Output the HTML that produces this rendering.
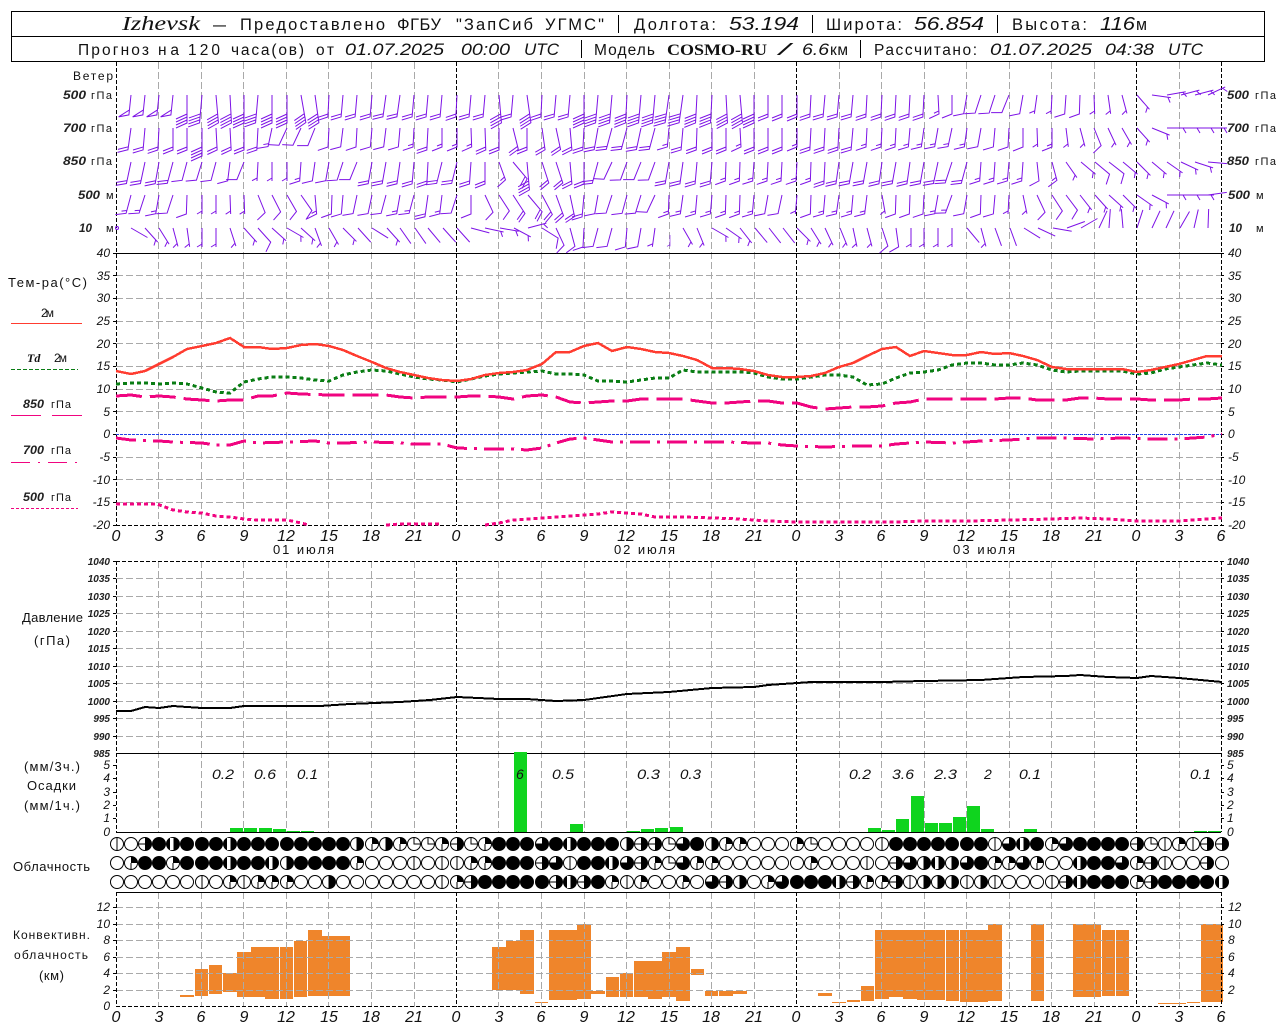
<!DOCTYPE html>
<html lang="ru"><head><meta charset="utf-8"><title>Izhevsk</title>
<style>
html,body{margin:0;padding:0;background:#fff;width:1280px;height:1024px;overflow:hidden}
svg{display:block}
text{font-family:"Liberation Sans",sans-serif;fill:#111;font-size:12px}
.i{font-style:italic}
.s{font-family:"Liberation Serif",serif;font-style:italic}
.h{font-size:16.5px}.h2{font-size:15.5px}
.hn{font-size:18px;font-style:italic}.h2n{font-size:17px;font-style:italic}
.n{font-style:italic;font-size:12px;fill:#111}
.p{font-style:italic;font-size:10px;font-weight:bold;fill:#222}
.x{font-style:italic;font-size:16px;text-anchor:middle}
.e{text-anchor:end}
.m{text-anchor:middle;font-size:13px}
.r{font-size:14px;font-style:italic}
.l{font-size:12px;font-style:italic;font-weight:bold;fill:#222}
</style></head><body>
<svg width="1280" height="1024" viewBox="0 0 1280 1024" shape-rendering="crispEdges" xmlns="http://www.w3.org/2000/svg">
<defs>
<path id="s" d="M0 0V19"/>
<path id="h" d="M0 0V19M0 16L-5 19"/>
<path id="g" d="M0 0V19L-10 23"/>
<path id="c" d="M0 0V19L-10 23M0 16L-5 18"/>
<path id="d" d="M0 0V22L-10 26M0 19L-10 23"/>
<path id="t" d="M0 0V28L-11 33M0 25L-11 30M0 22L-11 27M0 19L-11 24"/>
<path id="f" d="M0 0V20L-10 23L0 15"/>
<circle id="E" r="6.5" fill="#fff" stroke="#000"/>
<g id="v"><use href="#E"/><path d="M0-6.5V6.5" stroke="#000"/></g>
<circle id="F" r="7" fill="#000"/>
<g id="G"><use href="#E"/><path d="M0-6.5A6.5 6.5 0 0 1 0 6.5Z" fill="#000"/><path d="M-6.5 0H0" stroke="#000"/></g>
<g id="C"><use href="#E"/><path d="M0-6.5A6.5 6.5 0 0 1 0 6.5Z" fill="#000"/><path d="M0-6.5V6.5" stroke="#000"/></g>
<g id="N"><use href="#F"/><rect x="-3" y="-6" width="3.5" height="12" fill="#fff"/></g>
<g id="Q"><use href="#E"/><path d="M0 0V-6.5A6.5 6.5 0 0 1 6.5 0Z" fill="#000"/><path d="M0 0V6.5" stroke="#000"/></g>
<g id="U"><use href="#E"/><path d="M0-6.5V0H6.5" stroke="#000" fill="none"/></g>
<g id="K"><use href="#F"/><path d="M0 0H-7A7 7 0 0 1 0-7Z" fill="#fff"/><path d="M0 0H-6.5A6.5 6.5 0 0 1 0-6.5" fill="none" stroke="#000"/></g>
</defs>

<!-- header -->
<rect x="11.5" y="11.5" width="1253" height="25" fill="none" stroke="#000"/>
<rect x="11.5" y="36.5" width="1253" height="25" fill="none" stroke="#000"/>
<text class="s" x="122" y="30" style="font-size:20px" textLength="78" lengthAdjust="spacingAndGlyphs">Izhevsk</text>
<text class="h" x="213" y="30" textLength="13" lengthAdjust="spacingAndGlyphs">—</text>
<text class="h" x="240" y="30" textLength="145">Предоставлено</text>
<text class="h" x="397" y="30" textLength="44">ФГБУ</text>
<text class="h" x="456" y="30" textLength="77">"ЗапСиб</text>
<text class="h" x="545" y="30" textLength="59">УГМС"</text>
<path d="M618.5 15V33M812.5 15V33M997.5 15V33M581.5 40V58M860.5 40V58" stroke="#000" fill="none"/>
<text class="h" x="634" y="30" textLength="82">Долгота:</text>
<text class="hn" x="729" y="30" textLength="70" lengthAdjust="spacingAndGlyphs">53.194</text>
<text class="h" x="826" y="30" textLength="76">Широта:</text>
<text class="hn" x="914" y="30" textLength="70" lengthAdjust="spacingAndGlyphs">56.854</text>
<text class="h" x="1012" y="30" textLength="75">Высота:</text>
<text class="hn" x="1100" y="30" textLength="35" lengthAdjust="spacingAndGlyphs">116</text>
<text class="h" x="1136" y="30" textLength="11" lengthAdjust="spacingAndGlyphs">м</text>
<text class="h2" x="78" y="55" textLength="71">Прогноз</text>
<text class="h2" x="158" y="55" textLength="21">на</text>
<text class="h2" x="188" y="55" textLength="32">120</text>
<text class="h2" x="231" y="55" textLength="73">часа(ов)</text>
<text class="h2" x="316" y="55" textLength="18">от</text>
<text class="h2n" x="345" y="55" textLength="99" lengthAdjust="spacingAndGlyphs">01.07.2025</text>
<text class="h2n" x="461" y="55" textLength="49" lengthAdjust="spacingAndGlyphs">00:00</text>
<text class="h2n" x="524" y="55" textLength="35" lengthAdjust="spacingAndGlyphs">UTC</text>
<text class="h2" x="594" y="55" textLength="61">Модель</text>
<text class="s" x="667" y="55" style="font-size:15.5px;font-style:normal;font-weight:bold" textLength="100" lengthAdjust="spacingAndGlyphs">COSMO-RU</text>
<text class="h2n" x="779" y="55" textLength="11" lengthAdjust="spacingAndGlyphs">/</text>
<text class="h2n" x="802" y="55" textLength="27" lengthAdjust="spacingAndGlyphs">6.6</text>
<text class="h2" x="830" y="55" textLength="18">км</text>
<text class="h2" x="874" y="55" textLength="103">Рассчитано:</text>
<text class="h2n" x="990" y="55" textLength="102" lengthAdjust="spacingAndGlyphs">01.07.2025</text>
<text class="h2n" x="1105" y="55" textLength="49" lengthAdjust="spacingAndGlyphs">04:38</text>
<text class="h2n" x="1168" y="55" textLength="35" lengthAdjust="spacingAndGlyphs">UTC</text>

<!-- conv cloud bars -->
<g fill="#ef852b">
<rect x="180" y="995" width="14" height="2"/><rect x="195" y="969" width="13" height="27"/><rect x="209" y="965" width="13" height="29"/><rect x="223" y="973" width="14" height="19"/><rect x="237" y="952" width="14" height="45"/><rect x="251" y="947" width="14" height="50"/><rect x="265" y="947" width="14" height="52"/><rect x="280" y="947" width="13" height="52"/><rect x="294" y="941" width="13" height="56"/><rect x="308" y="930" width="14" height="66"/><rect x="322" y="936" width="14" height="60"/><rect x="336" y="936" width="14" height="60"/>
<rect x="492" y="947" width="14" height="43"/><rect x="506" y="941" width="14" height="49"/><rect x="520" y="930" width="14" height="64"/><rect x="535" y="1002" width="13" height="1"/><rect x="549" y="930" width="14" height="70"/><rect x="563" y="930" width="14" height="70"/><rect x="577" y="924" width="14" height="75"/><rect x="591" y="991" width="14" height="3"/><rect x="606" y="977" width="13" height="20"/><rect x="620" y="973" width="13" height="24"/><rect x="634" y="961" width="14" height="36"/><rect x="648" y="961" width="14" height="38"/><rect x="662" y="952" width="14" height="45"/><rect x="676" y="947" width="14" height="54"/><rect x="691" y="969" width="13" height="6"/><rect x="705" y="991" width="13" height="5"/><rect x="719" y="991" width="14" height="5"/><rect x="733" y="991" width="14" height="3"/>
<rect x="818" y="993" width="14" height="3"/><rect x="832" y="1002" width="14" height="1"/><rect x="847" y="1000" width="13" height="2"/><rect x="861" y="986" width="13" height="15"/><rect x="875" y="930" width="14" height="69"/><rect x="889" y="930" width="14" height="67"/><rect x="903" y="930" width="14" height="69"/><rect x="917" y="930" width="14" height="70"/><rect x="931" y="930" width="14" height="70"/><rect x="946" y="930" width="13" height="71"/><rect x="960" y="930" width="14" height="72"/><rect x="974" y="930" width="14" height="72"/><rect x="988" y="924" width="14" height="77"/><rect x="1031" y="924" width="13" height="77"/><rect x="1073" y="924" width="14" height="73"/><rect x="1087" y="924" width="14" height="73"/><rect x="1102" y="930" width="13" height="66"/><rect x="1116" y="930" width="13" height="66"/><rect x="1158" y="1003" width="14" height="1"/><rect x="1172" y="1003" width="14" height="1"/><rect x="1187" y="1002" width="13" height="1"/><rect x="1201" y="924" width="14" height="78"/><rect x="1215" y="924" width="8" height="78"/>
</g>

<!-- grid -->
<path fill="none" stroke="#a9a9a9" stroke-dasharray="7 3" d="M116 275.5H1221M116 298.5H1221M116 321.5H1221M116 343.5H1221M116 366.5H1221M116 389.5H1221M116 411.5H1221M116 457.5H1221M116 479.5H1221M116 502.5H1221
M116 578.5H1221M116 596.5H1221M116 613.5H1221M116 631.5H1221M116 648.5H1221M116 666.5H1221M116 683.5H1221M116 701.5H1221M116 718.5H1221M116 736.5H1221
M116 907.5H1221M116 924.5H1221M116 940.5H1221M116 957.5H1221M116 973.5H1221M116 990.5H1221
M158.5 62V525M158.5 561V832M158.5 892V1007M201.5 62V525M201.5 561V832M201.5 892V1007M243.5 62V525M243.5 561V832M243.5 892V1007M286.5 62V525M286.5 561V832M286.5 892V1007M328.5 62V525M328.5 561V832M328.5 892V1007M371.5 62V525M371.5 561V832M371.5 892V1007M414.5 62V525M414.5 561V832M414.5 892V1007
M498.5 62V525M498.5 561V832M498.5 892V1007M541.5 62V525M541.5 561V832M541.5 892V1007M584.5 62V525M584.5 561V832M584.5 892V1007M626.5 62V525M626.5 561V832M626.5 892V1007M669.5 62V525M669.5 561V832M669.5 892V1007M711.5 62V525M711.5 561V832M711.5 892V1007M754.5 62V525M754.5 561V832M754.5 892V1007
M839.5 62V525M839.5 561V832M839.5 892V1007M881.5 62V525M881.5 561V832M881.5 892V1007M924.5 62V525M924.5 561V832M924.5 892V1007M966.5 62V525M966.5 561V832M966.5 892V1007M1009.5 62V525M1009.5 561V832M1009.5 892V1007M1051.5 62V525M1051.5 561V832M1051.5 892V1007M1094.5 62V525M1094.5 561V832M1094.5 892V1007M1179.5 62V525M1179.5 561V832M1179.5 892V1007"/>
<path fill="none" stroke="#000" stroke-dasharray="4 2" d="M116.5 62V525M116.5 561V832M116.5 892V1007M456.5 62V525M456.5 561V832M456.5 892V1007M796.5 62V525M796.5 561V832M796.5 892V1007M1136.5 62V525M1136.5 561V832M1136.5 892V1007M1221.5 62V525M1221.5 561V832M1221.5 892V1007M116 525.5H1221M116 561.5H1221M116 1006.5H1221"/>
<path fill="none" stroke="#000" d="M113 253.5H1224M116 753.5H1221M116 832.5H1221M116 892.5H1221
M113 275.5h3M113 298.5h3M113 321.5h3M113 343.5h3M113 366.5h3M113 389.5h3M113 411.5h3M113 434.5h3M113 457.5h3M113 479.5h3M113 502.5h3M113 525.5h3M1221 275.5h3M1221 298.5h3M1221 321.5h3M1221 343.5h3M1221 366.5h3M1221 389.5h3M1221 411.5h3M1221 434.5h3M1221 457.5h3M1221 479.5h3M1221 502.5h3M1221 525.5h3
M113 561.5h3M113 578.5h3M113 596.5h3M113 613.5h3M113 631.5h3M113 648.5h3M113 666.5h3M113 683.5h3M113 701.5h3M113 718.5h3M113 736.5h3M1221 561.5h3M1221 578.5h3M1221 596.5h3M1221 613.5h3M1221 631.5h3M1221 648.5h3M1221 666.5h3M1221 683.5h3M1221 701.5h3M1221 718.5h3M1221 736.5h3
M113 765.5h3M113 778.5h3M113 792.5h3M113 805.5h3M113 818.5h3M1221 765.5h3M1221 778.5h3M1221 792.5h3M1221 805.5h3M1221 818.5h3
M113 907.5h3M113 924.5h3M113 940.5h3M113 957.5h3M113 973.5h3M113 990.5h3M1221 907.5h3M1221 924.5h3M1221 940.5h3M1221 957.5h3M1221 973.5h3M1221 990.5h3"/>
<path d="M116 434.5H1221" stroke="#2040e8" stroke-dasharray="3 1" fill="none"/>

<!-- curves -->
<g fill="none">
<polyline stroke="#f00480" stroke-width="3" stroke-dasharray="4 3" points="116,504 157,504 173,510 187,512 202,513 216,516 230,517 244,519 258,520 287,520 301,523 309,525"/>
<polyline stroke="#f00480" stroke-width="3" stroke-dasharray="4 3" points="386,525 400,524 414,524 442,524"/>
<polyline stroke="#f00480" stroke-width="3" stroke-dasharray="4 3" points="485,525 499,523 513,520 527,519 542,518 570,516 598,514 612,512 641,514 655,517 683,517 712,518 740,519 768,521 797,522 853,522 896,522 924,521 967,521 1009,520 1052,519 1080,518 1108,519 1137,521 1179,521 1207,519 1222,518"/>
<polyline stroke="#f00480" stroke-width="3" stroke-dasharray="20 7 3 7" points="116,438 131,440 159,441 173,442 202,443 216,445 230,445 244,441 258,443 287,442 315,441 329,443 343,443 372,442 400,443 414,444 442,444 457,448 485,449 513,449 527,450 542,448 556,443 570,439 584,438 598,440 612,442 641,442 669,442 697,442 726,442 754,443 768,443 782,445 797,446 825,447 853,446 882,446 896,444 924,442 952,443 981,441 1009,440 1037,438 1066,438 1094,439 1122,438 1151,439 1179,439 1207,437 1222,434"/>
<polyline stroke="#f00480" stroke-width="3" stroke-dasharray="26 8" points="116,396 131,395 145,397 159,396 173,397 187,399 202,400 216,401 230,400 244,400 258,396 272,396 287,393 301,394 329,395 357,395 386,395 400,397 414,398 428,397 442,397 457,397 471,396 485,396 499,397 513,399 527,396 542,395 556,397 570,402 584,403 598,402 612,401 627,401 641,399 655,399 669,399 683,399 697,401 712,403 726,403 740,402 754,401 768,401 782,403 797,403 811,407 825,409 839,408 853,407 867,407 882,406 896,403 910,402 924,399 938,399 952,399 967,399 981,399 995,399 1009,398 1023,398 1037,400 1052,400 1066,400 1080,398 1094,398 1108,399 1122,399 1137,399 1151,400 1165,400 1179,400 1193,399 1207,399 1222,398"/>
<polyline stroke="#0a7d14" stroke-width="3" stroke-dasharray="4 3" points="116,384 131,383 145,383 159,384 173,383 187,384 202,388 216,392 230,393 244,382 258,379 272,377 287,377 301,378 315,380 329,381 343,375 357,372 372,370 386,371 400,374 414,377 428,379 442,380 457,382 471,379 485,376 499,374 513,373 527,372 542,371 556,374 570,374 584,375 598,381 612,381 627,382 641,380 655,378 669,378 683,370 697,372 712,372 726,372 740,372 754,373 768,377 782,379 797,379 811,377 825,375 839,375 853,377 867,385 882,384 896,378 910,373 924,372 938,370 952,365 967,363 981,363 995,365 1009,365 1023,363 1037,365 1052,370 1066,372 1080,371 1094,371 1108,371 1122,371 1137,374 1151,373 1165,369 1179,367 1193,365 1207,363 1222,365"/>
<polyline stroke="#ff3c30" stroke-width="2.5" points="116,371 131,374 145,371 159,364 173,357 187,349 202,346 216,343 230,338 244,347 258,347 272,349 287,348 301,345 315,344 329,346 343,350 357,356 372,362 386,368 400,372 414,375 428,378 442,380 457,381 471,379 485,375 499,373 513,372 527,370 542,364 556,352 570,352 584,346 598,343 612,351 627,347 641,349 655,352 669,353 683,356 697,360 712,368 726,368 740,369 754,371 768,375 782,377 797,377 811,376 825,373 839,367 853,363 867,356 882,349 896,347 910,356 924,351 938,353 952,355 967,355 981,352 995,354 1009,353 1023,356 1037,360 1052,367 1066,369 1080,369 1094,369 1108,369 1122,369 1137,372 1151,370 1165,367 1179,364 1193,360 1207,356 1222,356"/>
<polyline stroke="#000" stroke-width="2" points="116,711 131,711 145,707 159,708 173,706 187,707 202,708 230,708 244,706 320,706 350,704 400,702 430,700 457,697 499,699 527,699 556,701 584,700 627,694 669,692 712,688 754,687 768,685 797,683 811,682 882,682 924,681 981,680 1023,677 1066,676 1080,675 1108,677 1137,678 1151,676 1179,678 1222,682"/>
</g>

<!-- precip bars -->
<g fill="#0fd41e">
<rect x="230" y="828" width="13" height="4"/><rect x="244" y="828" width="13" height="4"/><rect x="259" y="828" width="13" height="4"/><rect x="273" y="829" width="13" height="3"/><rect x="287" y="831" width="13" height="1"/><rect x="301" y="831" width="13" height="1"/>
<rect x="514" y="752" width="13" height="80"/><rect x="570" y="824" width="13" height="8"/><rect x="627" y="831" width="13" height="1"/><rect x="641" y="829" width="13" height="3"/><rect x="655" y="828" width="13" height="4"/><rect x="670" y="827" width="13" height="5"/>
<rect x="868" y="828" width="13" height="4"/><rect x="882" y="830" width="13" height="2"/><rect x="896" y="819" width="13" height="13"/><rect x="911" y="796" width="13" height="36"/><rect x="925" y="823" width="13" height="9"/><rect x="939" y="823" width="13" height="9"/><rect x="953" y="817" width="13" height="15"/><rect x="967" y="806" width="13" height="26"/><rect x="981" y="829" width="13" height="3"/><rect x="1024" y="829" width="13" height="3"/><rect x="1194" y="831" width="13" height="1"/><rect x="1208" y="831" width="13" height="1"/>
</g>
<text class="r" x="212" y="779" textLength="22" lengthAdjust="spacingAndGlyphs">0.2</text><text class="r" x="254" y="779" textLength="22" lengthAdjust="spacingAndGlyphs">0.6</text><text class="r" x="297" y="779" textLength="21" lengthAdjust="spacingAndGlyphs">0.1</text><text class="r" x="516" y="779">6</text><text class="r" x="552" y="779" textLength="22" lengthAdjust="spacingAndGlyphs">0.5</text><text class="r" x="637" y="779" textLength="23" lengthAdjust="spacingAndGlyphs">0.3</text><text class="r" x="680" y="779" textLength="21" lengthAdjust="spacingAndGlyphs">0.3</text><text class="r" x="849" y="779" textLength="22" lengthAdjust="spacingAndGlyphs">0.2</text><text class="r" x="892" y="779" textLength="22" lengthAdjust="spacingAndGlyphs">3.6</text><text class="r" x="934" y="779" textLength="23" lengthAdjust="spacingAndGlyphs">2.3</text><text class="r" x="984" y="779">2</text><text class="r" x="1019" y="779" textLength="22" lengthAdjust="spacingAndGlyphs">0.1</text><text class="r" x="1190" y="779" textLength="21" lengthAdjust="spacingAndGlyphs">0.1</text>

<!-- wind barbs -->
<g fill="none" stroke="#7d12e6" shape-rendering="auto" stroke-width="1">
<circle cx="117" cy="228" r="1.5"/>
<g transform="translate(0,95)">
<use href="#f" transform="translate(131)rotate(6)"/><use href="#f" transform="translate(145)rotate(6)"/><use href="#f" transform="translate(159)rotate(6)"/><use href="#f" transform="translate(173)rotate(6)"/><use href="#t" transform="translate(187)"/><use href="#t" transform="translate(202)rotate(5)"/><use href="#t" transform="translate(216)rotate(-5)"/><use href="#t" transform="translate(230)rotate(-3)"/><use href="#t" transform="translate(244)"/><use href="#t" transform="translate(258)rotate(5)"/><use href="#t" transform="translate(272)"/><use href="#t" transform="translate(287)"/><use href="#t" transform="translate(301)rotate(-10)"/><use href="#t" transform="translate(315)rotate(-8)"/><use href="#d" transform="translate(329)rotate(3)"/><use href="#d" transform="translate(343)rotate(5)"/><use href="#d" transform="translate(357)rotate(5)"/><use href="#d" transform="translate(372)rotate(5)"/><use href="#d" transform="translate(386)rotate(8)"/><use href="#d" transform="translate(400)rotate(8)"/><use href="#d" transform="translate(414)rotate(5)"/><use href="#d" transform="translate(428)rotate(5)"/><use href="#d" transform="translate(442)rotate(5)"/><use href="#d" transform="translate(457)rotate(3)"/><use href="#d" transform="translate(471)rotate(5)"/><use href="#d" transform="translate(485)rotate(5)"/><use href="#t" transform="translate(499)rotate(-5)"/><use href="#d" transform="translate(513)rotate(5)"/><use href="#t" transform="translate(527)rotate(-8)"/><use href="#d" transform="translate(542)rotate(3)"/><use href="#d" transform="translate(556)rotate(5)"/><use href="#d" transform="translate(570)rotate(5)"/><use href="#t" transform="translate(584)"/><use href="#t" transform="translate(598)rotate(5)"/><use href="#t" transform="translate(612)rotate(5)"/><use href="#t" transform="translate(627)rotate(3)"/><use href="#t" transform="translate(641)rotate(5)"/><use href="#t" transform="translate(655)rotate(5)"/><use href="#t" transform="translate(669)rotate(8)"/><use href="#t" transform="translate(683)rotate(8)"/><use href="#t" transform="translate(697)rotate(3)"/><use href="#t" transform="translate(712)rotate(3)"/><use href="#t" transform="translate(726)rotate(-3)"/><use href="#t" transform="translate(740)rotate(-5)"/><use href="#t" transform="translate(754)"/><use href="#d" transform="translate(768)"/><use href="#d" transform="translate(782)"/><use href="#d" transform="translate(797)"/><use href="#d" transform="translate(811)rotate(3)"/><use href="#d" transform="translate(825)rotate(5)"/><use href="#d" transform="translate(839)rotate(5)"/><use href="#d" transform="translate(853)rotate(5)"/><use href="#d" transform="translate(867)rotate(3)"/><use href="#d" transform="translate(882)rotate(3)"/><use href="#d" transform="translate(896)rotate(3)"/><use href="#d" transform="translate(910)rotate(3)"/><use href="#d" transform="translate(924)rotate(3)"/><use href="#c" transform="translate(938)rotate(-3)"/><use href="#g" transform="translate(952)"/><use href="#g" transform="translate(967)rotate(10)"/><use href="#g" transform="translate(981)rotate(18)"/><use href="#g" transform="translate(995)rotate(18)"/><use href="#g" transform="translate(1009)rotate(22)"/><use href="#g" transform="translate(1023)rotate(10)"/><use href="#h" transform="translate(1037)rotate(8)"/><use href="#h" transform="translate(1052)rotate(3)"/><use href="#g" transform="translate(1066)rotate(4)"/><use href="#g" transform="translate(1080)rotate(2)"/><use href="#h" transform="translate(1094)rotate(-2)"/><use href="#h" transform="translate(1108)rotate(-8)"/><use href="#h" transform="translate(1122)rotate(-15)"/><use href="#h" transform="translate(1137)rotate(-41)"/><use href="#h" transform="translate(1152)rotate(-82)"/><use href="#h" transform="translate(1167)rotate(-100)"/><use href="#h" transform="translate(1181)rotate(-105)"/><use href="#h" transform="translate(1195)rotate(-105)"/><use href="#h" transform="translate(1208)rotate(-115)"/>
</g>
<g transform="translate(0,128)">
<use href="#d" transform="translate(131)rotate(8)"/><use href="#d" transform="translate(145)rotate(5)"/><use href="#d" transform="translate(159)rotate(3)"/><use href="#d" transform="translate(173)"/><use href="#d" transform="translate(187)"/><use href="#t" transform="translate(202)"/><use href="#d" transform="translate(216)rotate(-3)"/><use href="#d" transform="translate(230)rotate(-3)"/><use href="#d" transform="translate(244)"/><use href="#d" transform="translate(258)rotate(3)"/><use href="#c" transform="translate(272)rotate(12)"/><use href="#g" transform="translate(287)rotate(25)"/><use href="#g" transform="translate(301)rotate(25)"/><use href="#g" transform="translate(315)rotate(22)"/><use href="#g" transform="translate(329)rotate(3)"/><use href="#g" transform="translate(343)rotate(7)"/><use href="#g" transform="translate(357)rotate(3)"/><use href="#g" transform="translate(372)rotate(5)"/><use href="#g" transform="translate(386)rotate(7)"/><use href="#g" transform="translate(400)rotate(5)"/><use href="#c" transform="translate(414)rotate(3)"/><use href="#d" transform="translate(428)rotate(3)"/><use href="#c" transform="translate(442)"/><use href="#c" transform="translate(457)"/><use href="#c" transform="translate(471)rotate(-2)"/><use href="#d" transform="translate(485)rotate(-2)"/><use href="#d" transform="translate(499)"/><use href="#d" transform="translate(513)rotate(-14)"/><use href="#d" transform="translate(527)"/><use href="#d" transform="translate(542)rotate(-8)"/><use href="#d" transform="translate(556)rotate(-12)"/><use href="#d" transform="translate(570)rotate(-5)"/><use href="#d" transform="translate(584)rotate(3)"/><use href="#d" transform="translate(598)rotate(10)"/><use href="#d" transform="translate(612)rotate(15)"/><use href="#d" transform="translate(627)rotate(15)"/><use href="#d" transform="translate(641)rotate(12)"/><use href="#d" transform="translate(655)rotate(15)"/><use href="#c" transform="translate(669)rotate(5)"/><use href="#d" transform="translate(683)rotate(5)"/><use href="#d" transform="translate(697)rotate(2)"/><use href="#d" transform="translate(712)"/><use href="#d" transform="translate(726)"/><use href="#c" transform="translate(740)rotate(-3)"/><use href="#d" transform="translate(754)"/><use href="#d" transform="translate(768)"/><use href="#d" transform="translate(782)"/><use href="#c" transform="translate(797)"/><use href="#d" transform="translate(811)rotate(3)"/><use href="#d" transform="translate(825)rotate(3)"/><use href="#d" transform="translate(839)rotate(3)"/><use href="#d" transform="translate(853)rotate(5)"/><use href="#c" transform="translate(867)rotate(3)"/><use href="#c" transform="translate(882)rotate(3)"/><use href="#c" transform="translate(896)rotate(3)"/><use href="#c" transform="translate(910)rotate(5)"/><use href="#c" transform="translate(924)rotate(8)"/><use href="#c" transform="translate(938)rotate(10)"/><use href="#c" transform="translate(952)rotate(12)"/><use href="#c" transform="translate(967)rotate(8)"/><use href="#g" transform="translate(981)rotate(10)"/><use href="#g" transform="translate(995)rotate(5)"/><use href="#g" transform="translate(1009)rotate(3)"/><use href="#g" transform="translate(1023)"/><use href="#h" transform="translate(1037)rotate(-2)"/><use href="#c" transform="translate(1052)"/><use href="#h" transform="translate(1066)rotate(-7)"/><use href="#h" transform="translate(1080)rotate(-15)"/><use href="#g" transform="translate(1094)rotate(-22)"/><use href="#h" transform="translate(1108)rotate(-25)"/><use href="#h" transform="translate(1122)rotate(-30)"/><use href="#h" transform="translate(1137)rotate(-42)"/><use href="#h" transform="translate(1152)rotate(-68)"/><use href="#h" transform="translate(1167)rotate(-90)"/><use href="#h" transform="translate(1181)rotate(-90)"/><use href="#h" transform="translate(1195)rotate(-90)"/><use href="#h" transform="translate(1208)rotate(-90)"/>
</g>
<g transform="translate(0,162)">
<use href="#d" transform="translate(131)rotate(12)"/><use href="#d" transform="translate(145)rotate(12)"/><use href="#d" transform="translate(159)rotate(10)"/><use href="#d" transform="translate(173)rotate(15)"/><use href="#g" transform="translate(187)rotate(15)"/><use href="#g" transform="translate(202)rotate(17)"/><use href="#g" transform="translate(216)rotate(15)"/><use href="#g" transform="translate(230)rotate(7)"/><use href="#g" transform="translate(244)rotate(22)"/><use href="#h" transform="translate(258)rotate(3)"/><use href="#h" transform="translate(272)"/><use href="#h" transform="translate(287)"/><use href="#c" transform="translate(301)rotate(4)"/><use href="#g" transform="translate(315)rotate(8)"/><use href="#g" transform="translate(329)rotate(10)"/><use href="#g" transform="translate(343)rotate(18)"/><use href="#g" transform="translate(357)rotate(22)"/><use href="#d" transform="translate(372)rotate(10)"/><use href="#d" transform="translate(386)rotate(10)"/><use href="#d" transform="translate(400)rotate(8)"/><use href="#d" transform="translate(414)rotate(5)"/><use href="#d" transform="translate(428)rotate(3)"/><use href="#d" transform="translate(442)rotate(14)"/><use href="#d" transform="translate(457)rotate(14)"/><use href="#d" transform="translate(471)rotate(4)"/><use href="#d" transform="translate(485)"/><use href="#c" transform="translate(499)rotate(-20)"/><use href="#d" transform="translate(513)rotate(-40)"/><use href="#t" transform="translate(527)rotate(-5)"/><use href="#d" transform="translate(542)rotate(-18)"/><use href="#d" transform="translate(556)rotate(-18)"/><use href="#d" transform="translate(570)rotate(-5)"/><use href="#d" transform="translate(584)"/><use href="#d" transform="translate(598)rotate(15)"/><use href="#g" transform="translate(612)rotate(25)"/><use href="#g" transform="translate(627)rotate(20)"/><use href="#g" transform="translate(641)rotate(22)"/><use href="#g" transform="translate(655)rotate(20)"/><use href="#d" transform="translate(669)rotate(10)"/><use href="#d" transform="translate(683)rotate(8)"/><use href="#d" transform="translate(697)rotate(5)"/><use href="#d" transform="translate(712)rotate(5)"/><use href="#c" transform="translate(726)rotate(2)"/><use href="#c" transform="translate(740)rotate(2)"/><use href="#c" transform="translate(754)rotate(4)"/><use href="#c" transform="translate(768)rotate(3)"/><use href="#c" transform="translate(782)rotate(3)"/><use href="#c" transform="translate(797)rotate(3)"/><use href="#c" transform="translate(811)rotate(2)"/><use href="#d" transform="translate(825)rotate(3)"/><use href="#d" transform="translate(839)rotate(8)"/><use href="#d" transform="translate(853)rotate(10)"/><use href="#d" transform="translate(867)rotate(10)"/><use href="#d" transform="translate(882)rotate(8)"/><use href="#d" transform="translate(896)rotate(10)"/><use href="#d" transform="translate(910)rotate(8)"/><use href="#d" transform="translate(924)rotate(10)"/><use href="#d" transform="translate(938)rotate(12)"/><use href="#d" transform="translate(952)rotate(18)"/><use href="#d" transform="translate(967)rotate(15)"/><use href="#c" transform="translate(981)rotate(4)"/><use href="#c" transform="translate(995)rotate(4)"/><use href="#c" transform="translate(1009)rotate(5)"/><use href="#c" transform="translate(1023)rotate(4)"/><use href="#g" transform="translate(1037)rotate(-6)"/><use href="#c" transform="translate(1052)rotate(-15)"/><use href="#h" transform="translate(1066)rotate(-35)"/><use href="#h" transform="translate(1081)rotate(-50)"/><use href="#g" transform="translate(1095)rotate(-50)"/><use href="#g" transform="translate(1109)rotate(-52)"/><use href="#h" transform="translate(1123)rotate(-50)"/><use href="#h" transform="translate(1137)rotate(-45)"/><use href="#h" transform="translate(1152)rotate(-50)"/><use href="#h" transform="translate(1167)rotate(-55)"/><use href="#h" transform="translate(1181)rotate(-65)"/><use href="#h" transform="translate(1195)rotate(-72)"/><use href="#s" transform="translate(1208)rotate(-85)"/>
</g>
<g transform="translate(0,195)">
<use href="#c" transform="translate(131)rotate(15)"/><use href="#c" transform="translate(145)rotate(18)"/><use href="#c" transform="translate(159)rotate(10)"/><use href="#g" transform="translate(173)rotate(18)"/><use href="#g" transform="translate(187)rotate(2)"/><use href="#h" transform="translate(202)"/><use href="#h" transform="translate(216)"/><use href="#h" transform="translate(230)rotate(-2)"/><use href="#h" transform="translate(244)rotate(-2)"/><use href="#g" transform="translate(258)rotate(-22)"/><use href="#g" transform="translate(272)rotate(-27)"/><use href="#g" transform="translate(287)rotate(-30)"/><use href="#g" transform="translate(301)rotate(-35)"/><use href="#c" transform="translate(315)rotate(-5)"/><use href="#g" transform="translate(332)rotate(2)"/><use href="#g" transform="translate(343)rotate(5)"/><use href="#g" transform="translate(357)rotate(12)"/><use href="#g" transform="translate(372)rotate(12)"/><use href="#g" transform="translate(386)rotate(15)"/><use href="#c" transform="translate(400)rotate(10)"/><use href="#c" transform="translate(414)rotate(15)"/><use href="#d" transform="translate(428)rotate(8)"/><use href="#c" transform="translate(442)rotate(7)"/><use href="#g" transform="translate(457)rotate(18)"/><use href="#g" transform="translate(471)"/><use href="#g" transform="translate(485)rotate(-25)"/><use href="#g" transform="translate(499)rotate(-33)"/><use href="#d" transform="translate(513)rotate(-33)"/><use href="#d" transform="translate(528)rotate(-40)"/><use href="#d" transform="translate(542)rotate(-28)"/><use href="#d" transform="translate(556)rotate(-20)"/><use href="#d" transform="translate(570)rotate(-12)"/><use href="#d" transform="translate(584)rotate(5)"/><use href="#g" transform="translate(598)rotate(10)"/><use href="#g" transform="translate(612)rotate(18)"/><use href="#g" transform="translate(627)rotate(15)"/><use href="#g" transform="translate(641)rotate(17)"/><use href="#g" transform="translate(655)rotate(25)"/><use href="#c" transform="translate(669)rotate(2)"/><use href="#c" transform="translate(683)rotate(8)"/><use href="#c" transform="translate(697)rotate(5)"/><use href="#c" transform="translate(712)rotate(5)"/><use href="#c" transform="translate(726)rotate(2)"/><use href="#c" transform="translate(740)rotate(2)"/><use href="#c" transform="translate(754)rotate(5)"/><use href="#g" transform="translate(768)rotate(10)"/><use href="#g" transform="translate(782)rotate(12)"/><use href="#h" transform="translate(797)rotate(5)"/><use href="#g" transform="translate(811)rotate(2)"/><use href="#c" transform="translate(825)rotate(5)"/><use href="#c" transform="translate(839)rotate(8)"/><use href="#c" transform="translate(853)rotate(5)"/><use href="#c" transform="translate(867)rotate(7)"/><use href="#h" transform="translate(882)rotate(-10)"/><use href="#g" transform="translate(896)rotate(2)"/><use href="#g" transform="translate(910)rotate(2)"/><use href="#g" transform="translate(924)rotate(3)"/><use href="#c" transform="translate(938)rotate(10)"/><use href="#c" transform="translate(952)rotate(20)"/><use href="#g" transform="translate(967)rotate(10)"/><use href="#g" transform="translate(981)rotate(2)"/><use href="#g" transform="translate(995)rotate(5)"/><use href="#h" transform="translate(1009)rotate(3)"/><use href="#h" transform="translate(1023)rotate(-12)"/><use href="#g" transform="translate(1037)rotate(-25)"/><use href="#g" transform="translate(1052)rotate(-33)"/><use href="#g" transform="translate(1066)rotate(-37)"/><use href="#h" transform="translate(1080)rotate(-38)"/><use href="#h" transform="translate(1095)rotate(-42)"/><use href="#h" transform="translate(1109)rotate(-48)"/><use href="#h" transform="translate(1123)rotate(-45)"/><use href="#h" transform="translate(1137)rotate(-55)"/><use href="#h" transform="translate(1152)rotate(-62)"/><use href="#h" transform="translate(1167)rotate(-90)"/><use href="#h" transform="translate(1181)rotate(-90)"/><use href="#h" transform="translate(1195)rotate(-90)"/><use href="#s" transform="translate(1208)rotate(-98)"/>
</g>
<g transform="translate(0,228)">
<use href="#s" transform="translate(131)rotate(-60)"/><use href="#h" transform="translate(145)rotate(-42)"/><use href="#h" transform="translate(159)rotate(-32)"/><use href="#h" transform="translate(173)rotate(-15)"/><use href="#h" transform="translate(187)rotate(-8)"/><use href="#h" transform="translate(202)"/><use href="#h" transform="translate(216)"/><use href="#h" transform="translate(230)rotate(-18)"/><use href="#h" transform="translate(244)rotate(-42)"/><use href="#g" transform="translate(258)rotate(-42)"/><use href="#h" transform="translate(272)rotate(-48)"/><use href="#h" transform="translate(287)rotate(-60)"/><use href="#h" transform="translate(301)rotate(-48)"/><use href="#h" transform="translate(315)rotate(-20)"/><use href="#h" transform="translate(329)rotate(-30)"/><use href="#h" transform="translate(343)rotate(-45)"/><use href="#s" transform="translate(358)rotate(-42)"/><use href="#s" transform="translate(372)rotate(-58)"/><use href="#h" transform="translate(387)rotate(-42)"/><use href="#s" transform="translate(400)rotate(-35)"/><use href="#s" transform="translate(415)rotate(-35)"/><use href="#s" transform="translate(428)rotate(-40)"/><use href="#s" transform="translate(443)rotate(-42)"/><use href="#s" transform="translate(457)rotate(-42)"/><use href="#s" transform="translate(471)rotate(-75)"/><use href="#h" transform="translate(485)rotate(-78)"/><use href="#h" transform="translate(500)rotate(-80)"/><use href="#h" transform="translate(514)rotate(-62)"/><use href="#h" transform="translate(528)rotate(-105)"/><use href="#g" transform="translate(542)rotate(-58)"/><use href="#g" transform="translate(556)rotate(-25)"/><use href="#g" transform="translate(570)rotate(-15)"/><use href="#g" transform="translate(584)rotate(3)"/><use href="#g" transform="translate(598)rotate(15)"/><use href="#g" transform="translate(612)rotate(15)"/><use href="#g" transform="translate(627)rotate(5)"/><use href="#g" transform="translate(641)rotate(10)"/><use href="#h" transform="translate(655)rotate(8)"/><use href="#h" transform="translate(670,7) scale(.6)"/><use href="#h" transform="translate(683)rotate(-30)"/><use href="#h" transform="translate(697)rotate(-22)"/><use href="#h" transform="translate(712)rotate(-60)"/><use href="#h" transform="translate(726)rotate(-55)"/><use href="#h" transform="translate(740)rotate(-38)"/><use href="#s" transform="translate(755)rotate(-40)"/><use href="#s" transform="translate(769)rotate(-38)"/><use href="#s" transform="translate(783)rotate(-38)"/><use href="#h" transform="translate(797)rotate(-45)"/><use href="#h" transform="translate(811)rotate(-32)"/><use href="#h" transform="translate(825)rotate(-25)"/><use href="#h" transform="translate(840)rotate(-22)"/><use href="#h" transform="translate(853)rotate(-12)"/><use href="#h" transform="translate(867)rotate(-15)"/><use href="#g" transform="translate(882)rotate(-18)"/><use href="#g" transform="translate(896)rotate(-8)"/><use href="#h" transform="translate(911)"/><use href="#h" transform="translate(924)"/><use href="#h" transform="translate(938)"/><use href="#h" transform="translate(952)"/><use href="#s" transform="translate(967)rotate(-40)"/><use href="#h" transform="translate(981)rotate(-15)"/><use href="#s" transform="translate(995)rotate(-20)"/><use href="#s" transform="translate(1010)rotate(-20)"/><use href="#s" transform="translate(1024)rotate(-58)"/><use href="#s" transform="translate(1038)rotate(-65)"/><use href="#s" transform="translate(1053)rotate(-80)"/><use href="#s" transform="translate(1067)rotate(-110)"/><use href="#s" transform="translate(1081)rotate(-120)"/><use href="#s" transform="translate(1099)rotate(-155)"/><use href="#s" transform="translate(1109)rotate(-176)"/><use href="#s" transform="translate(1123)rotate(175)"/><use href="#s" transform="translate(1137)rotate(-162)"/><use href="#s" transform="translate(1152)rotate(-155)"/><use href="#s" transform="translate(1166)rotate(-155)"/><use href="#s" transform="translate(1180)rotate(-150)"/><use href="#s" transform="translate(1194)rotate(-167)"/><use href="#s" transform="translate(1208)rotate(-178)"/>
</g>
</g>

<!-- clouds -->
<g shape-rendering="auto">
<g transform="translate(0,844)">
<use href="#v" x="117"/><use href="#E" x="131"/><use href="#G" x="145"/><use href="#F" x="159"/><use href="#N" x="173"/><use href="#F" x="187"/><use href="#F" x="202"/><use href="#F" x="216"/><use href="#N" x="230"/><use href="#F" x="244"/><use href="#F" x="258"/><use href="#F" x="272"/><use href="#F" x="287"/><use href="#F" x="301"/><use href="#F" x="315"/><use href="#F" x="329"/><use href="#F" x="343"/><use href="#C" x="357"/><use href="#Q" x="372"/><use href="#C" x="386"/><use href="#Q" x="400"/><use href="#U" x="414"/><use href="#U" x="428"/><use href="#Q" x="442"/><use href="#G" x="457"/><use href="#U" x="471"/><use href="#Q" x="485"/><use href="#F" x="499"/><use href="#F" x="513"/><use href="#F" x="527"/><use href="#K" x="542"/><use href="#F" x="556"/><use href="#N" x="570"/><use href="#F" x="584"/><use href="#F" x="598"/><use href="#F" x="612"/><use href="#C" x="627"/><use href="#G" x="641"/><use href="#G" x="655"/><use href="#U" x="669"/><use href="#K" x="683"/><use href="#F" x="697"/><use href="#C" x="712"/><use href="#Q" x="726"/><use href="#Q" x="740"/><use href="#E" x="754"/><use href="#E" x="768"/><use href="#E" x="782"/><use href="#Q" x="797"/><use href="#U" x="811"/><use href="#E" x="825"/><use href="#E" x="839"/><use href="#E" x="853"/><use href="#E" x="867"/><use href="#v" x="882"/><use href="#F" x="896"/><use href="#F" x="910"/><use href="#F" x="924"/><use href="#F" x="938"/><use href="#F" x="952"/><use href="#F" x="967"/><use href="#F" x="981"/><use href="#v" x="995"/><use href="#K" x="1009"/><use href="#N" x="1023"/><use href="#F" x="1037"/><use href="#Q" x="1052"/><use href="#K" x="1066"/><use href="#F" x="1080"/><use href="#F" x="1094"/><use href="#F" x="1108"/><use href="#F" x="1122"/><use href="#G" x="1137"/><use href="#U" x="1151"/><use href="#v" x="1165"/><use href="#Q" x="1179"/><use href="#v" x="1193"/><use href="#G" x="1207"/><use href="#G" x="1222"/>
</g>
<g transform="translate(0,863)">
<use href="#E" x="117"/><use href="#Q" x="131"/><use href="#F" x="145"/><use href="#F" x="159"/><use href="#Q" x="173"/><use href="#F" x="187"/><use href="#F" x="202"/><use href="#F" x="216"/><use href="#N" x="230"/><use href="#F" x="244"/><use href="#F" x="258"/><use href="#N" x="272"/><use href="#C" x="287"/><use href="#F" x="301"/><use href="#F" x="315"/><use href="#F" x="329"/><use href="#F" x="343"/><use href="#Q" x="357"/><use href="#E" x="372"/><use href="#E" x="386"/><use href="#E" x="400"/><use href="#v" x="414"/><use href="#E" x="428"/><use href="#v" x="442"/><use href="#v" x="457"/><use href="#Q" x="471"/><use href="#Q" x="485"/><use href="#F" x="499"/><use href="#F" x="513"/><use href="#F" x="527"/><use href="#G" x="542"/><use href="#K" x="556"/><use href="#v" x="570"/><use href="#F" x="584"/><use href="#F" x="598"/><use href="#N" x="612"/><use href="#K" x="627"/><use href="#G" x="641"/><use href="#Q" x="655"/><use href="#U" x="669"/><use href="#K" x="683"/><use href="#Q" x="697"/><use href="#Q" x="712"/><use href="#E" x="726"/><use href="#E" x="740"/><use href="#E" x="754"/><use href="#E" x="768"/><use href="#E" x="782"/><use href="#E" x="797"/><use href="#Q" x="811"/><use href="#E" x="825"/><use href="#E" x="839"/><use href="#E" x="853"/><use href="#v" x="867"/><use href="#E" x="882"/><use href="#G" x="896"/><use href="#K" x="910"/><use href="#C" x="924"/><use href="#N" x="938"/><use href="#C" x="952"/><use href="#K" x="967"/><use href="#F" x="981"/><use href="#Q" x="995"/><use href="#Q" x="1009"/><use href="#K" x="1023"/><use href="#Q" x="1037"/><use href="#E" x="1052"/><use href="#E" x="1066"/><use href="#N" x="1080"/><use href="#F" x="1094"/><use href="#F" x="1108"/><use href="#K" x="1122"/><use href="#Q" x="1137"/><use href="#G" x="1151"/><use href="#v" x="1165"/><use href="#E" x="1179"/><use href="#E" x="1193"/><use href="#G" x="1207"/><use href="#E" x="1222"/>
</g>
<g transform="translate(0,882)">
<use href="#E" x="117"/><use href="#E" x="131"/><use href="#E" x="145"/><use href="#E" x="159"/><use href="#E" x="173"/><use href="#E" x="187"/><use href="#v" x="202"/><use href="#E" x="216"/><use href="#Q" x="230"/><use href="#v" x="244"/><use href="#Q" x="258"/><use href="#Q" x="272"/><use href="#Q" x="287"/><use href="#E" x="301"/><use href="#E" x="315"/><use href="#C" x="329"/><use href="#E" x="343"/><use href="#E" x="357"/><use href="#E" x="372"/><use href="#E" x="386"/><use href="#E" x="400"/><use href="#E" x="414"/><use href="#E" x="428"/><use href="#v" x="442"/><use href="#Q" x="457"/><use href="#G" x="471"/><use href="#F" x="485"/><use href="#F" x="499"/><use href="#F" x="513"/><use href="#F" x="527"/><use href="#F" x="542"/><use href="#G" x="556"/><use href="#N" x="570"/><use href="#G" x="584"/><use href="#F" x="598"/><use href="#Q" x="612"/><use href="#v" x="627"/><use href="#Q" x="641"/><use href="#E" x="655"/><use href="#E" x="669"/><use href="#Q" x="683"/><use href="#E" x="697"/><use href="#K" x="712"/><use href="#G" x="726"/><use href="#C" x="740"/><use href="#E" x="754"/><use href="#Q" x="768"/><use href="#K" x="782"/><use href="#F" x="797"/><use href="#F" x="811"/><use href="#F" x="825"/><use href="#N" x="839"/><use href="#G" x="853"/><use href="#Q" x="867"/><use href="#Q" x="882"/><use href="#G" x="896"/><use href="#v" x="910"/><use href="#C" x="924"/><use href="#C" x="938"/><use href="#C" x="952"/><use href="#v" x="967"/><use href="#C" x="981"/><use href="#v" x="995"/><use href="#E" x="1009"/><use href="#E" x="1023"/><use href="#E" x="1037"/><use href="#v" x="1052"/><use href="#G" x="1066"/><use href="#N" x="1080"/><use href="#F" x="1094"/><use href="#F" x="1108"/><use href="#F" x="1122"/><use href="#Q" x="1137"/><use href="#G" x="1151"/><use href="#F" x="1165"/><use href="#F" x="1179"/><use href="#F" x="1193"/><use href="#F" x="1207"/><use href="#N" x="1222"/>
</g>
</g>

<!-- legend -->
<text x="73" y="80" textLength="40">Ветер</text>
<text x="63" y="99" class="l" textLength="23" lengthAdjust="spacingAndGlyphs">500</text><text x="91" y="99" style="font-size:11px" textLength="21">гПа</text>
<text x="63" y="132" class="l" textLength="23" lengthAdjust="spacingAndGlyphs">700</text><text x="91" y="132" style="font-size:11px" textLength="21">гПа</text>
<text x="63" y="165" class="l" textLength="23" lengthAdjust="spacingAndGlyphs">850</text><text x="91" y="165" style="font-size:11px" textLength="21">гПа</text>
<text x="78" y="199" class="l" textLength="22" lengthAdjust="spacingAndGlyphs">500</text><text x="106" y="199" style="font-size:11px">м</text>
<text x="79" y="232" class="l" textLength="13" lengthAdjust="spacingAndGlyphs">10</text><text x="106" y="232" style="font-size:11px">м</text>
<text x="1227" y="99" class="l" textLength="22" lengthAdjust="spacingAndGlyphs">500</text><text x="1255" y="99" style="font-size:11px" textLength="21">гПа</text>
<text x="1227" y="132" class="l" textLength="22" lengthAdjust="spacingAndGlyphs">700</text><text x="1255" y="132" style="font-size:11px" textLength="21">гПа</text>
<text x="1227" y="165" class="l" textLength="22" lengthAdjust="spacingAndGlyphs">850</text><text x="1255" y="165" style="font-size:11px" textLength="21">гПа</text>
<text x="1228" y="199" class="l" textLength="22" lengthAdjust="spacingAndGlyphs">500</text><text x="1256" y="199" style="font-size:11px">м</text>
<text x="1229" y="232" class="l" textLength="13" lengthAdjust="spacingAndGlyphs">10</text><text x="1256" y="232" style="font-size:11px">м</text>
<text x="8" y="287" style="font-size:13px" textLength="79">Тем-ра(°С)</text>
<text x="41" y="317" textLength="13">2м</text>
<text x="27" y="362" class="s" style="font-weight:bold;font-size:12px">Td</text><text x="54" y="362" textLength="13">2м</text>
<text x="23" y="408" class="l" textLength="21" lengthAdjust="spacingAndGlyphs">850</text><text x="51" y="408" style="font-size:11px" textLength="20">гПа</text>
<text x="23" y="454" class="l" textLength="21" lengthAdjust="spacingAndGlyphs">700</text><text x="51" y="454" style="font-size:11px" textLength="20">гПа</text>
<text x="23" y="501" class="l" textLength="21" lengthAdjust="spacingAndGlyphs">500</text><text x="51" y="501" style="font-size:11px" textLength="20">гПа</text>
<path d="M11 323.5H82" stroke="#ff3c30" fill="none"/>
<path d="M11 369.5H78" stroke="#0a7d14" stroke-dasharray="4 2" fill="none"/>
<path d="M11 415.5H41M52 415.5H82" stroke="#f00480" fill="none"/>
<path d="M11 462.5H30M38 462.5H40M48 462.5H67M75 462.5H77" stroke="#f00480" fill="none"/>
<path d="M11 508.5H78" stroke="#f00480" stroke-dasharray="3 2" fill="none"/>
<text x="22" y="622" style="font-size:13px" textLength="61">Давление</text>
<text x="34" y="645" style="font-size:13px" textLength="36">(гПа)</text>
<text x="24" y="771" style="font-size:13px" textLength="56">(мм/3ч.)</text>
<text x="27" y="790" style="font-size:13px" textLength="49">Осадки</text>
<text x="24" y="810" style="font-size:13px" textLength="56">(мм/1ч.)</text>
<text x="13" y="871" style="font-size:13px" textLength="77">Облачность</text>
<text x="13" y="939" style="font-size:12px" textLength="77">Конвективн.</text>
<text x="14" y="959" style="font-size:12px" textLength="74">облачность</text>
<text x="39" y="980" style="font-size:13px" textLength="25">(км)</text>

<!-- temp axis -->
<text class="n e" x="110" y="257">40</text><text class="n e" x="110" y="280">35</text><text class="n e" x="110" y="302">30</text><text class="n e" x="110" y="325">25</text><text class="n e" x="110" y="348">20</text><text class="n e" x="110" y="370">15</text><text class="n e" x="110" y="393">10</text><text class="n e" x="110" y="416">5</text><text class="n e" x="110" y="438">0</text><text class="n e" x="110" y="461">-5</text><text class="n e" x="110" y="484">-10</text><text class="n e" x="110" y="506">-15</text><text class="n e" x="110" y="529">-20</text>
<text class="n" x="1228" y="257">40</text><text class="n" x="1228" y="280">35</text><text class="n" x="1228" y="302">30</text><text class="n" x="1228" y="325">25</text><text class="n" x="1228" y="348">20</text><text class="n" x="1228" y="370">15</text><text class="n" x="1228" y="393">10</text><text class="n" x="1228" y="416">5</text><text class="n" x="1228" y="438">0</text><text class="n" x="1228" y="461">-5</text><text class="n" x="1228" y="484">-10</text><text class="n" x="1228" y="506">-15</text><text class="n" x="1228" y="529">-20</text>
<!-- pressure axis -->
<text class="p e" x="110" y="565">1040</text><text class="p e" x="110" y="582">1035</text><text class="p e" x="110" y="600">1030</text><text class="p e" x="110" y="617">1025</text><text class="p e" x="110" y="635">1020</text><text class="p e" x="110" y="652">1015</text><text class="p e" x="110" y="670">1010</text><text class="p e" x="110" y="687">1005</text><text class="p e" x="110" y="705">1000</text><text class="p e" x="110" y="722">995</text><text class="p e" x="110" y="740">990</text><text class="p e" x="110" y="757">985</text>
<text class="p" x="1227" y="565">1040</text><text class="p" x="1227" y="582">1035</text><text class="p" x="1227" y="600">1030</text><text class="p" x="1227" y="617">1025</text><text class="p" x="1227" y="635">1020</text><text class="p" x="1227" y="652">1015</text><text class="p" x="1227" y="670">1010</text><text class="p" x="1227" y="687">1005</text><text class="p" x="1227" y="705">1000</text><text class="p" x="1227" y="722">995</text><text class="p" x="1227" y="740">990</text><text class="p" x="1227" y="757">985</text>
<!-- precip axis -->
<text class="n e" x="110" y="769">5</text><text class="n e" x="110" y="782">4</text><text class="n e" x="110" y="796">3</text><text class="n e" x="110" y="809">2</text><text class="n e" x="110" y="822">1</text><text class="n e" x="110" y="836">0</text>
<text class="n" x="1227" y="769">5</text><text class="n" x="1227" y="782">4</text><text class="n" x="1227" y="796">3</text><text class="n" x="1227" y="809">2</text><text class="n" x="1227" y="822">1</text><text class="n" x="1227" y="836">0</text>
<!-- conv axis -->
<text class="n e" x="110" y="911">12</text><text class="n e" x="110" y="928">10</text><text class="n e" x="110" y="944">8</text><text class="n e" x="110" y="961">6</text><text class="n e" x="110" y="977">4</text><text class="n e" x="110" y="994">2</text><text class="n e" x="110" y="1010">0</text>
<text class="n" x="1228" y="911">12</text><text class="n" x="1228" y="928">10</text><text class="n" x="1228" y="944">8</text><text class="n" x="1228" y="961">6</text><text class="n" x="1228" y="977">4</text><text class="n" x="1228" y="994">2</text>

<!-- x labels top -->
<text class="x" x="116" y="541">0</text><text class="x" x="159" y="541">3</text><text class="x" x="201" y="541">6</text><text class="x" x="244" y="541">9</text><text class="x" x="286" y="541">12</text><text class="x" x="329" y="541">15</text><text class="x" x="371" y="541">18</text><text class="x" x="414" y="541">21</text><text class="x" x="456" y="541">0</text><text class="x" x="499" y="541">3</text><text class="x" x="541" y="541">6</text><text class="x" x="584" y="541">9</text><text class="x" x="626" y="541">12</text><text class="x" x="669" y="541">15</text><text class="x" x="711" y="541">18</text><text class="x" x="754" y="541">21</text><text class="x" x="796" y="541">0</text><text class="x" x="839" y="541">3</text><text class="x" x="881" y="541">6</text><text class="x" x="924" y="541">9</text><text class="x" x="966" y="541">12</text><text class="x" x="1009" y="541">15</text><text class="x" x="1051" y="541">18</text><text class="x" x="1094" y="541">21</text><text class="x" x="1136" y="541">0</text><text class="x" x="1179" y="541">3</text><text class="x" x="1221" y="541">6</text>
<text x="273" y="554" style="font-size:13px" textLength="61">01 июля</text><text x="614" y="554" style="font-size:13px" textLength="61">02 июля</text><text x="953" y="554" style="font-size:13px" textLength="62">03 июля</text>
<!-- x labels bottom -->
<text class="x" x="116" y="1022">0</text><text class="x" x="159" y="1022">3</text><text class="x" x="201" y="1022">6</text><text class="x" x="244" y="1022">9</text><text class="x" x="286" y="1022">12</text><text class="x" x="329" y="1022">15</text><text class="x" x="371" y="1022">18</text><text class="x" x="414" y="1022">21</text><text class="x" x="456" y="1022">0</text><text class="x" x="499" y="1022">3</text><text class="x" x="541" y="1022">6</text><text class="x" x="584" y="1022">9</text><text class="x" x="626" y="1022">12</text><text class="x" x="669" y="1022">15</text><text class="x" x="711" y="1022">18</text><text class="x" x="754" y="1022">21</text><text class="x" x="796" y="1022">0</text><text class="x" x="839" y="1022">3</text><text class="x" x="881" y="1022">6</text><text class="x" x="924" y="1022">9</text><text class="x" x="966" y="1022">12</text><text class="x" x="1009" y="1022">15</text><text class="x" x="1051" y="1022">18</text><text class="x" x="1094" y="1022">21</text><text class="x" x="1136" y="1022">0</text><text class="x" x="1179" y="1022">3</text><text class="x" x="1221" y="1022">6</text>
</svg>
</body></html>
